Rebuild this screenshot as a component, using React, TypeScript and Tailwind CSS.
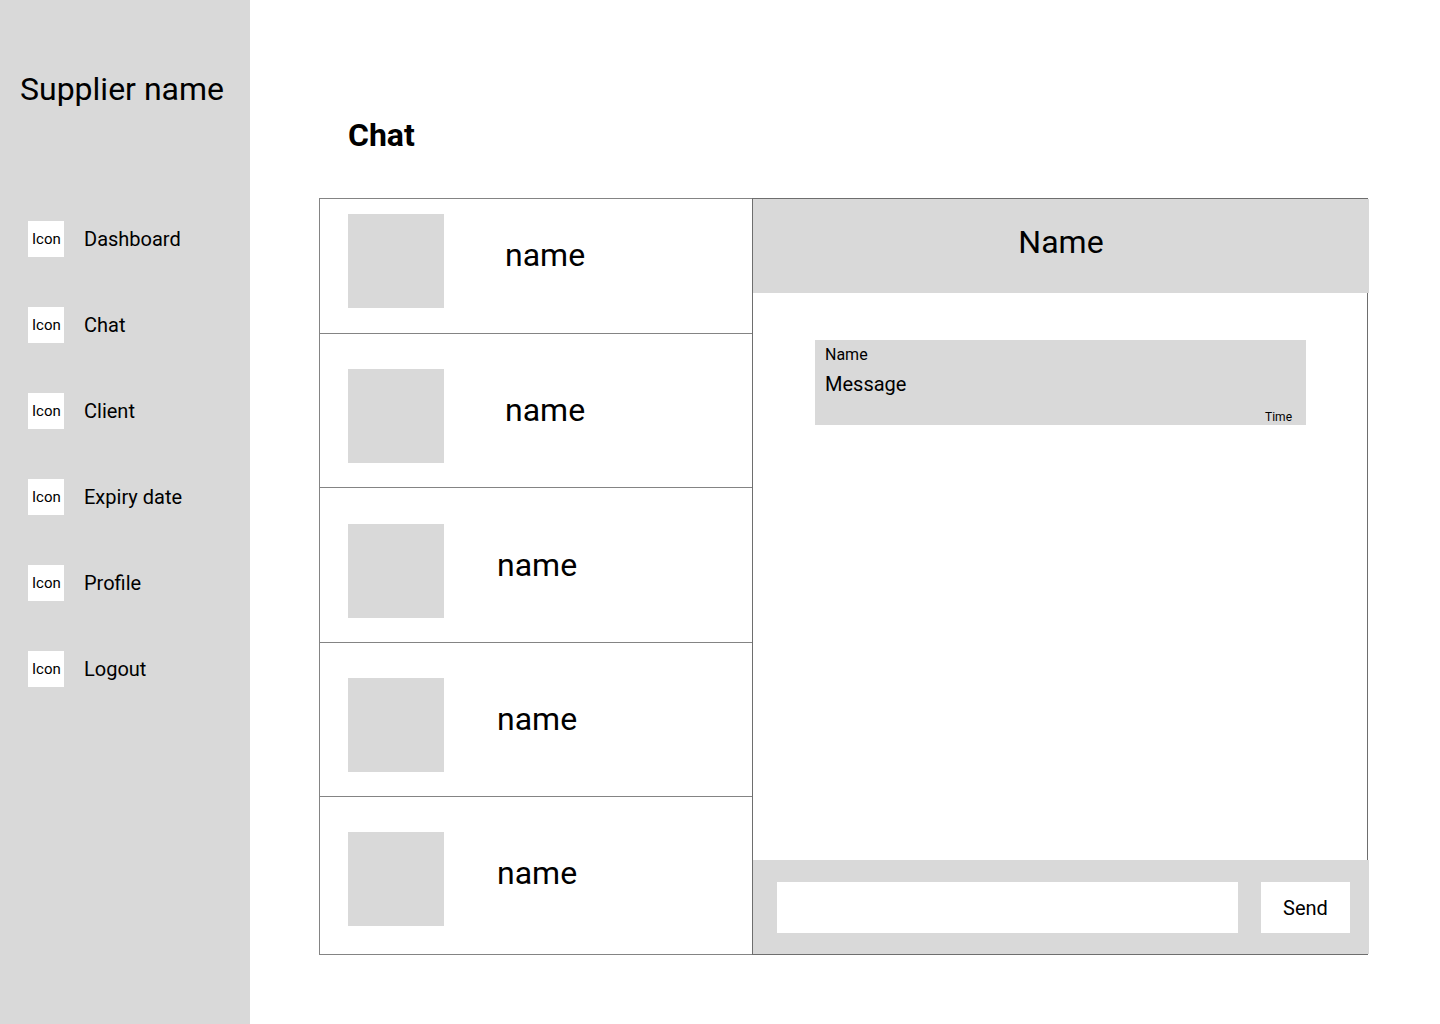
import React from "react";

const navItems = ["Dashboard", "Chat", "Client", "Expiry date", "Profile", "Logout"];

const contacts = [
  { id: 1, name: "name", row: "h-[134px] pt-[15px]", label: "ml-[61px]" },
  { id: 2, name: "name", row: "h-[153px] pt-[35px]", label: "ml-[61px]" },
  { id: 3, name: "name", row: "h-[154px] pt-9", label: "ml-[53px]" },
  { id: 4, name: "name", row: "h-[153px] pt-[35px]", label: "ml-[53px]" },
  { id: 5, name: "name", row: "h-[157px] pt-[35px]", label: "ml-[53px]" },
];

function Sidebar() {
  return (
    <aside className="w-[250px] shrink-0 bg-[#d9d9d9]">
      <p className="pl-5 pt-[70px] text-[32px] leading-[38px] whitespace-nowrap">Supplier name</p>
      <nav className="mt-[113px]">
        <ul className="flex flex-col gap-[50px] pl-7">
          {navItems.map((item) => (
            <li key={item}>
              <a href="#" className="flex items-center gap-5">
                <span className="flex size-9 items-center bg-white pl-1 text-[15px] leading-[18px]">Icon</span>
                <span className="text-xl leading-6">{item}</span>
              </a>
            </li>
          ))}
        </ul>
      </nav>
    </aside>
  );
}

function ContactList() {
  return (
    <ul className="w-[433px] shrink-0 border-y border-l border-[#848484]">
      {contacts.map((contact) => (
        <li key={contact.id} className="border-b border-[#848484] last:border-b-0">
          <button type="button" className={`flex w-full items-start pl-7 text-left ${contact.row}`}>
            <span className="flex items-center">
              <span className="h-[94px] w-24 bg-[#d9d9d9]" />
              <span className={`-mt-3 text-[32px] leading-[38px] ${contact.label}`}>{contact.name}</span>
            </span>
          </button>
        </li>
      ))}
    </ul>
  );
}

function Conversation() {
  return (
    <section className="flex min-w-0 flex-1 flex-col border border-[#6e6e6e]">
      <header className="-mr-0.5 h-[94px] bg-[#d9d9d9] pt-6 text-center">
        <h2 className="text-[32px] leading-[38px]">Name</h2>
      </header>
      <div className="flex-1 pl-[62px] pr-[61px] pt-[47px]">
        <article className="h-[85px] bg-[#d9d9d9] px-[10px] pt-[5px]">
          <p className="text-base leading-[19px]">Name</p>
          <p className="mt-2 text-xl leading-6">Message</p>
          <p className="mt-[14px] pr-1 text-right text-xs leading-[14px]">Time</p>
        </article>
      </div>
      <form className="-mr-0.5 flex h-[94px] gap-[23px] bg-[#d9d9d9] pl-6 pr-[19px] pt-[22px]" onSubmit={(e) => e.preventDefault()}>
        <input type="text" aria-label="Message" className="h-[51px] min-w-0 flex-1 bg-white px-3 text-xl outline-none" />
        <button type="submit" className="h-[51px] w-[89px] bg-white text-xl leading-6">Send</button>
      </form>
    </section>
  );
}

export default function App() {
  return (
    <div className="flex min-h-screen bg-white font-['Roboto',sans-serif] text-black">
      <Sidebar />
      <main className="min-w-0 flex-1 pl-[69px] pr-[72px] pb-[69px]">
        <h1 className="pl-[29px] pt-[116px] text-[32px] font-bold leading-[38px]">Chat</h1>
        <div className="mt-11 flex">
          <ContactList />
          <Conversation />
        </div>
      </main>
    </div>
  );
}
